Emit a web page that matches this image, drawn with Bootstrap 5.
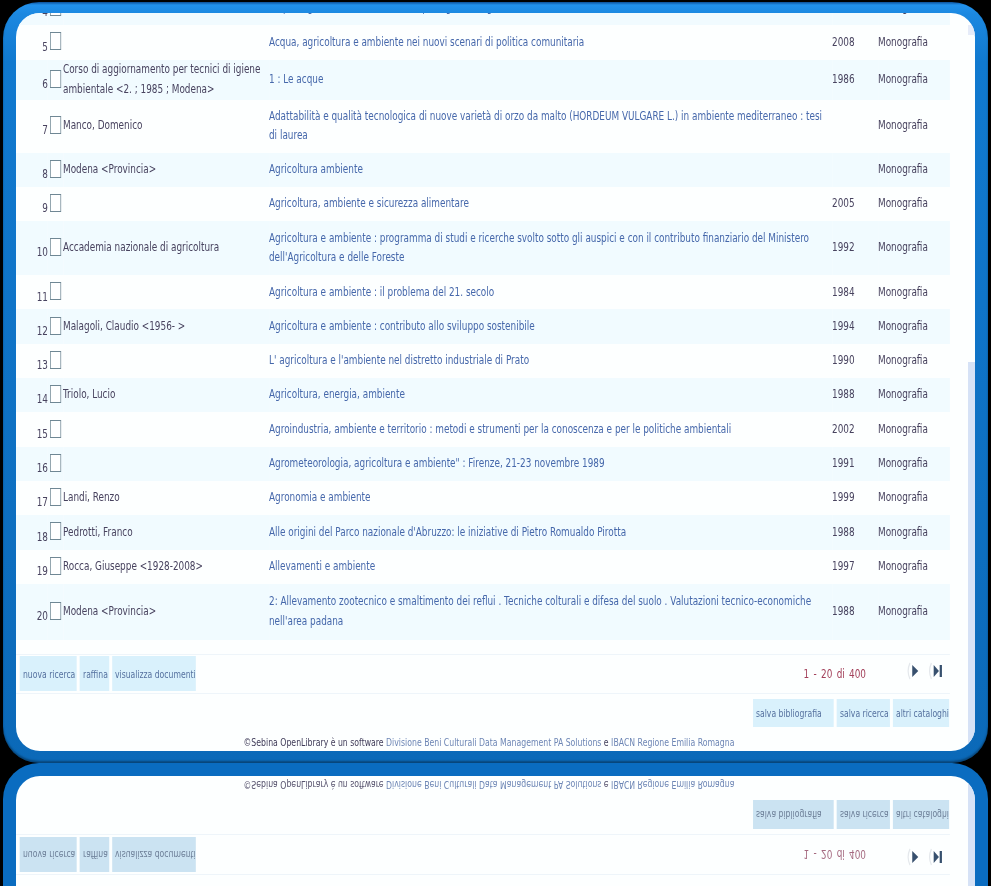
<!DOCTYPE html>
<html lang="it">
<head>
<meta charset="utf-8">
<title>Sebina OpenLibrary</title>
<link rel="stylesheet" href="https://cdn.jsdelivr.net/npm/bootstrap@5.3.0/dist/css/bootstrap.min.css">
<style>
html,body{height:886px;overflow:hidden;background:#000;margin:0}
body{font-family:"DejaVu Sans","Liberation Sans",sans-serif;font-size:12px;color:#48435f}
a{color:#4668ab;text-decoration:none}
.stage{padding:2px 3px 0;width:991px}
.frame{height:761px;padding:11px 13px 12px;border-radius:36px;background:linear-gradient(#0c4f98 0,#2191ec 3px,#1c88e0 12px,#1079cf 60px,#0f74c8 300px,#0b69b8 100%);box-shadow:inset 0 -2px 2px rgba(0,0,0,.35)}
.mirror-clip{height:123px;overflow:hidden}
.frame-m{transform-origin:0 0;transform:translateY(761px) scaleY(-1);background:#0a6cc0;box-shadow:none;padding-bottom:13px}
.pane{height:100%;background:#fdffff;border-radius:24px;overflow:hidden;position:relative}
.sb{position:absolute;right:0;width:7px;background:#d6e2f6}
.sb-a{top:12px;height:10px;background:#e6ecf9}
.sb-t{top:349px;bottom:0}
.sq{--k:.74;width:calc(959px / var(--k));transform:scaleX(var(--k));transform-origin:0 0;filter:blur(.45px);height:100%;display:flex;flex-direction:column}
.sq-m{justify-content:flex-end;filter:blur(.7px)}
.tbl{--bs-table-bg:transparent;--bs-table-color:#48435f;table-layout:fixed;width:calc(934px / var(--k));margin:-22px 0 0;font-size:12px;line-height:19.5px}
.tbl>tbody>tr>td{padding:0;border:0;vertical-align:middle}
.tbl>tbody>tr>td:nth-child(4){padding:0 calc(6px / var(--k)) 0 0}
.tbl>tbody>tr.alt>td{background:#f1fbff}
.h1r>td{height:34.3px}.h2a>td{height:40px}.h2b>td{height:53px}.h2c>td{height:54px}.h2d>td{height:56px}
.cn{width:calc(32px / var(--k));text-align:right}
.tbl>tbody>tr>td.cn{padding-top:10px}
.cc{width:calc(15px / var(--k))}
.ca{width:calc(206px / var(--k))}
.ct{width:calc(563px / var(--k))}
.cy{width:calc(46px / var(--k))}
.ck{width:calc(72px / var(--k))}
.cbx{display:block;width:15px;height:18px;border:1.3px solid #6f8794;margin:0 0 2px calc(2px / var(--k));background:#fff}
.bar1{margin-top:14px;width:calc(934px / var(--k));height:41px;border-top:1px solid #eef5fa;border-bottom:1px solid #eef5fa;padding-left:calc(4px / var(--k))}
.bar2{width:calc(933px / var(--k));height:29px;margin-top:5px}
.tb{--bs-btn-padding-x:calc(3px / var(--k));--bs-btn-padding-y:0;--bs-btn-font-size:10.4px;--bs-btn-border-radius:0;--bs-btn-border-width:0;--bs-btn-bg:#d9f1fc;--bs-btn-color:#55719f;--bs-btn-hover-bg:#d9f1fc;--bs-btn-hover-color:#55719f;height:100%;line-height:1}
.sq-m .tb{--bs-btn-bg:#cbe3f2;--bs-btn-color:#6d7f98}
.bar1 .tb{height:35px}
.gp{gap:calc(3px / var(--k))}
.pager{color:#a3405a;margin-right:calc(38px / var(--k));word-spacing:2px}
.sq-m .pager{color:#a56a80}
.arr{width:calc(18px / var(--k));height:20px;margin:0 calc(5px / var(--k)) 6px 0}
.foot{height:18px;line-height:18px;margin-top:6px;width:calc(934px / var(--k));padding-left:calc(12px / var(--k));font-size:10.5px;white-space:nowrap;color:#3f3b58}
.foot a{color:#6d86b5}
.sq-m .foot{color:#57536e}
.w1{width:calc(81px / var(--k))}
.w2{width:calc(53px / var(--k))}
.w3{width:calc(56px / var(--k))}
.w4{width:calc(57px / var(--k))}
.w5{width:calc(29px / var(--k))}
.w6{width:calc(84px / var(--k))}
</style>
</head>
<body>
<div class="stage">
<div class="frame">
<div class="pane">
<div class="sq">
<table class="table tbl"><tbody>
<tr class="h1r alt"><td class="cn">4</td><td class="cc"><span class="cbx"></span></td><td class="ca"></td><td class="ct"><a href="#">Acqua, agricoltura e ambiente : aspetti giuridici, gestione e tutela del territorio</a></td><td class="cy">2006</td><td class="ck">Monografia</td></tr>
<tr class="h1r"><td class="cn">5</td><td class="cc"><span class="cbx"></span></td><td class="ca"></td><td class="ct"><a href="#">Acqua, agricoltura e ambiente nei nuovi scenari di politica comunitaria</a></td><td class="cy">2008</td><td class="ck">Monografia</td></tr>
<tr class="h2a alt"><td class="cn">6</td><td class="cc"><span class="cbx"></span></td><td class="ca">Corso di aggiornamento per tecnici di igiene ambientale &lt;2. ; 1985 ; Modena&gt;</td><td class="ct"><a href="#">1 : Le acque</a></td><td class="cy">1986</td><td class="ck">Monografia</td></tr>
<tr class="h2b"><td class="cn">7</td><td class="cc"><span class="cbx"></span></td><td class="ca">Manco, Domenico</td><td class="ct"><a href="#">Adattabilità e qualità tecnologica di nuove varietà di orzo da malto (HORDEUM VULGARE L.) in ambiente mediterraneo : tesi di laurea</a></td><td class="cy"></td><td class="ck">Monografia</td></tr>
<tr class="h1r alt"><td class="cn">8</td><td class="cc"><span class="cbx"></span></td><td class="ca">Modena &lt;Provincia&gt;</td><td class="ct"><a href="#">Agricoltura ambiente</a></td><td class="cy"></td><td class="ck">Monografia</td></tr>
<tr class="h1r"><td class="cn">9</td><td class="cc"><span class="cbx"></span></td><td class="ca"></td><td class="ct"><a href="#">Agricoltura, ambiente e sicurezza alimentare</a></td><td class="cy">2005</td><td class="ck">Monografia</td></tr>
<tr class="h2c alt"><td class="cn">10</td><td class="cc"><span class="cbx"></span></td><td class="ca">Accademia nazionale di agricoltura</td><td class="ct"><a href="#">Agricoltura e ambiente : programma di studi e ricerche svolto sotto gli auspici e con il contributo finanziario del Ministero dell'Agricoltura e delle Foreste</a></td><td class="cy">1992</td><td class="ck">Monografia</td></tr>
<tr class="h1r"><td class="cn">11</td><td class="cc"><span class="cbx"></span></td><td class="ca"></td><td class="ct"><a href="#">Agricoltura e ambiente : il problema del 21. secolo</a></td><td class="cy">1984</td><td class="ck">Monografia</td></tr>
<tr class="h1r alt"><td class="cn">12</td><td class="cc"><span class="cbx"></span></td><td class="ca">Malagoli, Claudio &lt;1956- &gt;</td><td class="ct"><a href="#">Agricoltura e ambiente : contributo allo sviluppo sostenibile</a></td><td class="cy">1994</td><td class="ck">Monografia</td></tr>
<tr class="h1r"><td class="cn">13</td><td class="cc"><span class="cbx"></span></td><td class="ca"></td><td class="ct"><a href="#">L' agricoltura e l'ambiente nel distretto industriale di Prato</a></td><td class="cy">1990</td><td class="ck">Monografia</td></tr>
<tr class="h1r alt"><td class="cn">14</td><td class="cc"><span class="cbx"></span></td><td class="ca">Triolo, Lucio</td><td class="ct"><a href="#">Agricoltura, energia, ambiente</a></td><td class="cy">1988</td><td class="ck">Monografia</td></tr>
<tr class="h1r"><td class="cn">15</td><td class="cc"><span class="cbx"></span></td><td class="ca"></td><td class="ct"><a href="#">Agroindustria, ambiente e territorio : metodi e strumenti per la conoscenza e per le politiche ambientali</a></td><td class="cy">2002</td><td class="ck">Monografia</td></tr>
<tr class="h1r alt"><td class="cn">16</td><td class="cc"><span class="cbx"></span></td><td class="ca"></td><td class="ct"><a href="#">Agrometeorologia, agricoltura e ambiente" : Firenze, 21-23 novembre 1989</a></td><td class="cy">1991</td><td class="ck">Monografia</td></tr>
<tr class="h1r"><td class="cn">17</td><td class="cc"><span class="cbx"></span></td><td class="ca">Landi, Renzo</td><td class="ct"><a href="#">Agronomia e ambiente</a></td><td class="cy">1999</td><td class="ck">Monografia</td></tr>
<tr class="h1r alt"><td class="cn">18</td><td class="cc"><span class="cbx"></span></td><td class="ca">Pedrotti, Franco</td><td class="ct"><a href="#">Alle origini del Parco nazionale d'Abruzzo: le iniziative di Pietro Romualdo Pirotta</a></td><td class="cy">1988</td><td class="ck">Monografia</td></tr>
<tr class="h1r"><td class="cn">19</td><td class="cc"><span class="cbx"></span></td><td class="ca">Rocca, Giuseppe &lt;1928-2008&gt;</td><td class="ct"><a href="#">Allevamenti e ambiente</a></td><td class="cy">1997</td><td class="ck">Monografia</td></tr>
<tr class="h2d alt"><td class="cn">20</td><td class="cc"><span class="cbx"></span></td><td class="ca">Modena &lt;Provincia&gt;</td><td class="ct"><a href="#">2: Allevamento zootecnico e smaltimento dei reflui . Tecniche colturali e difesa del suolo . Valutazioni tecnico-economiche nell'area padana</a></td><td class="cy">1988</td><td class="ck">Monografia</td></tr>
</tbody></table>
<div class="bar1 d-flex align-items-center justify-content-between">
<div class="d-flex gp"><a class="btn tb w4 text-nowrap d-flex align-items-center" href="#">nuova ricerca</a><a class="btn tb w5 text-nowrap d-flex align-items-center" href="#">raffina</a><a class="btn tb w6 text-nowrap d-flex align-items-center" href="#">visualizza documenti</a></div>
<div class="d-flex align-items-center"><span class="pager">1 - 20 di 400</span>
<svg class="arr" viewBox="0 0 24 20" preserveAspectRatio="none"><path d="M8 2Q3 10 8 18" fill="none" stroke="#e4e8ec" stroke-width="1.6"/><path d="M11 4L19 10L11 16Z" fill="#37506e"/></svg>
<svg class="arr" viewBox="0 0 24 20" preserveAspectRatio="none"><path d="M6 2Q1 10 6 18" fill="none" stroke="#e4e8ec" stroke-width="1.6"/><path d="M9 4L16 10L9 16Z" fill="#37506e"/><rect x="17" y="4" width="3" height="12" fill="#37506e"/></svg>
</div>
</div>
<div class="bar2 d-flex justify-content-end gp"><a class="btn tb w1 text-nowrap d-flex align-items-center" href="#">salva bibliografia</a><a class="btn tb w2 text-nowrap d-flex align-items-center" href="#">salva ricerca</a><a class="btn tb w3 text-nowrap d-flex align-items-center" href="#">altri cataloghi</a></div>
<div class="foot text-center">©Sebina OpenLibrary è un software <a href="#">Divisione Beni Culturali</a> <a href="#">Data Management PA Solutions</a> e <a href="#">IBACN Regione Emilia Romagna</a></div>
</div>
<div class="sb sb-a"></div><div class="sb sb-t"></div>
</div>
</div>
<div class="mirror-clip">
<div class="frame frame-m">
<div class="pane">
<div class="sq sq-m">
<div class="bar1 d-flex align-items-center justify-content-between">
<div class="d-flex gp"><a class="btn tb w4 text-nowrap d-flex align-items-center" href="#">nuova ricerca</a><a class="btn tb w5 text-nowrap d-flex align-items-center" href="#">raffina</a><a class="btn tb w6 text-nowrap d-flex align-items-center" href="#">visualizza documenti</a></div>
<div class="d-flex align-items-center"><span class="pager">1 - 20 di 400</span>
<svg class="arr" viewBox="0 0 24 20" preserveAspectRatio="none"><path d="M8 2Q3 10 8 18" fill="none" stroke="#e4e8ec" stroke-width="1.6"/><path d="M11 4L19 10L11 16Z" fill="#37506e"/></svg>
<svg class="arr" viewBox="0 0 24 20" preserveAspectRatio="none"><path d="M6 2Q1 10 6 18" fill="none" stroke="#e4e8ec" stroke-width="1.6"/><path d="M9 4L16 10L9 16Z" fill="#37506e"/><rect x="17" y="4" width="3" height="12" fill="#37506e"/></svg>
</div>
</div>
<div class="bar2 d-flex justify-content-end gp"><a class="btn tb w1 text-nowrap d-flex align-items-center" href="#">salva bibliografia</a><a class="btn tb w2 text-nowrap d-flex align-items-center" href="#">salva ricerca</a><a class="btn tb w3 text-nowrap d-flex align-items-center" href="#">altri cataloghi</a></div>
<div class="foot text-center">©Sebina OpenLibrary è un software <a href="#">Divisione Beni Culturali</a> <a href="#">Data Management PA Solutions</a> e <a href="#">IBACN Regione Emilia Romagna</a></div>
</div>
<div class="sb sb-t"></div>
</div>
</div>
</div>
</div>
<script src="https://cdn.jsdelivr.net/npm/bootstrap@5.3.0/dist/js/bootstrap.bundle.min.js"></script>
</body>
</html>
